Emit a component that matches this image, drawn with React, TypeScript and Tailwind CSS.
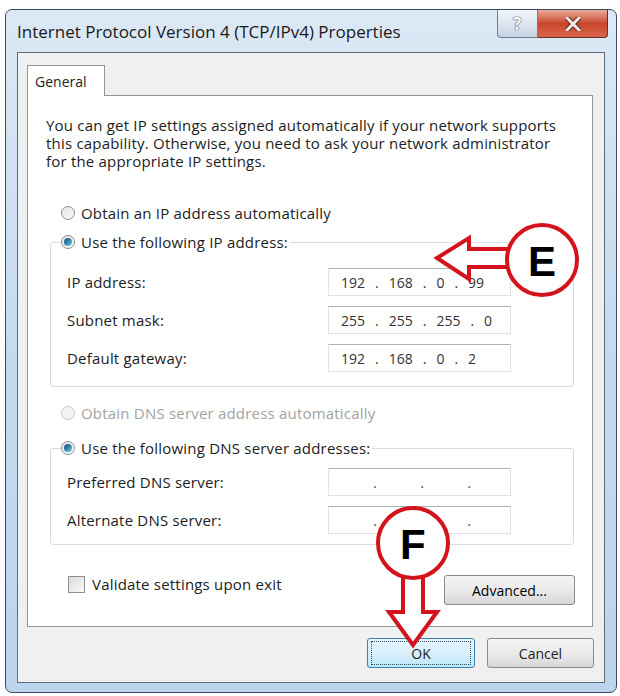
import type { ReactNode } from 'react';

const font = "font-['Open_Sans','Noto_Sans',sans-serif]";

function Radio({ checked = false, disabled = false }: { checked?: boolean; disabled?: boolean }) {
  return (
    <span
      className={`flex h-[14px] w-[14px] shrink-0 items-center justify-center rounded-full border ${
        disabled ? 'border-[#c9c9c9] bg-[#f2f2f2]' : 'border-[#8a8f95] bg-gradient-to-br from-[#e6e6e6] to-[#fafafa]'
      }`}
    >
      {checked && (
        <span className="h-[8px] w-[8px] rounded-full bg-gradient-to-br from-[#1d4f6e] via-[#2f86ad] to-[#7fd3ef]" />
      )}
    </span>
  );
}

function RadioRow({ label, checked, disabled }: { label: string; checked?: boolean; disabled?: boolean }) {
  return (
    <div className="flex h-[20px] items-center gap-[6px]">
      <Radio checked={checked} disabled={disabled} />
      <span className={disabled ? 'text-[#a3a3a3]' : 'text-[#1c1c1c]'}>{label}</span>
    </div>
  );
}

function IpField({ parts }: { parts: string[] }) {
  return (
    <div className="flex h-[28px] w-[183px] items-center gap-[10px] border border-[#dfe3e8] border-t-[#aeb2b8] bg-white pl-[12px] text-[14px] tracking-normal text-[#333]">
      {parts.map((p, i) => (
        <span key={i} className="flex items-center gap-[10px]">
          {i > 0 && <span>.</span>}
          <span>{p}</span>
        </span>
      ))}
    </div>
  );
}

function EmptyIpField() {
  return (
    <div className="flex h-[28px] w-[183px] items-center gap-[43px] border border-[#dfe3e8] border-t-[#aeb2b8] bg-white pl-[44px] text-[#555]">
      <span>.</span>
      <span>.</span>
      <span>.</span>
    </div>
  );
}

function FieldRow({ label, children }: { label: string; children: ReactNode }) {
  return (
    <div className="flex h-[28px] items-center">
      <span className="w-[261px] text-[#1c1c1c]">{label}</span>
      {children}
    </div>
  );
}

function Group({ legend, children }: { legend: ReactNode; children: ReactNode }) {
  return (
    <fieldset className="ml-[22px] mr-[18px] rounded-[3px] border border-[#d5dde3] pl-[10px]">
      <legend className="pr-[2px]">{legend}</legend>
      {children}
    </fieldset>
  );
}

function PushButton({ children, primary = false, className = '' }: { children: ReactNode; primary?: boolean; className?: string }) {
  return (
    <div
      className={`flex h-[30px] items-center justify-center rounded-[3px] border text-[14px] tracking-normal ${
        primary
          ? 'border-[#3c7fb1] bg-gradient-to-b from-[#eaf6fd] via-[#d9f0fc] to-[#bee6fd]'
          : 'border-[#8b8b8b] bg-gradient-to-b from-[#f4f4f4] via-[#ebebeb] to-[#d7d7d7]'
      } ${className}`}
    >
      {primary ? (
        <span className="flex h-[24px] w-[100px] items-center justify-center border border-dotted border-[#2b4f6a]">
          {children}
        </span>
      ) : (
        children
      )}
    </div>
  );
}

function Annotations() {
  return (
    <svg className="pointer-events-none absolute left-0 top-0" width="620" height="696" viewBox="0 0 620 696">
      <polygon
        points="437,258 469,238 469,249 510,249 510,267 469,267 469,279"
        fill="white"
        stroke="#d4141c"
        strokeWidth="4"
        strokeLinejoin="miter"
      />
      <circle cx="542" cy="260" r="35" fill="white" stroke="#d4141c" strokeWidth="4" />
      <text
        x="542"
        y="276"
        textAnchor="middle"
        fontFamily="Liberation Sans, Arial, sans-serif"
        fontWeight="bold"
        fontSize="42"
        fill="#000"
      >
        E
      </text>
      <polygon
        points="403,572 423,572 423,612 437,612 413,645 389,612 403,612"
        fill="white"
        stroke="#d4141c"
        strokeWidth="4"
        strokeLinejoin="miter"
      />
      <circle cx="413" cy="543" r="35" fill="white" stroke="#d4141c" strokeWidth="4" />
      <text
        x="413"
        y="559"
        textAnchor="middle"
        fontFamily="Liberation Sans, Arial, sans-serif"
        fontWeight="bold"
        fontSize="42"
        fill="#000"
      >
        F
      </text>
    </svg>
  );
}

export default function App() {
  return (
    <div className={`relative h-[696px] w-[620px] overflow-hidden bg-white pt-[9px] pl-[5px] ${font} text-[15px] tracking-[0.2px]`}>
      <div className="flex h-[684px] w-[612px] flex-col rounded-[7px] border border-[#3a4a5c] bg-gradient-to-b from-[#dce8f5] via-[#c6daee] to-[#bcd4ec]">
        {/* title bar */}
        <div className="flex h-[42px] items-start">
          <span className="pl-[11px] pt-[12px] text-[17px] leading-[20px] tracking-normal text-[#1a1a1a]">
            Internet Protocol Version 4 (TCP/IPv4) Properties
          </span>
          <div className="ml-auto mr-[8px] flex">
            <div className="flex h-[28px] w-[41px] items-center justify-center rounded-bl-[4px] border border-t-0 border-[#6f7f92] bg-gradient-to-b from-[#f2f6fa] via-[#dde6f0] to-[#c6d3e1]">
              <span className="text-[17px] font-bold leading-none text-white [text-shadow:0_0_1px_#4a5460,0_0_1px_#4a5460,0_0_1px_#4a5460]">?</span>
            </div>
            <div className="flex h-[28px] w-[70px] items-center justify-center rounded-br-[4px] border border-l-0 border-t-0 border-[#6e2b22] bg-gradient-to-b from-[#e9a99b] via-[#c9452c] to-[#d8664d]">
              <svg width="16" height="14" viewBox="0 0 16 14">
                <path d="M2 1 L14 13 M14 1 L2 13" stroke="#5a2a22" strokeWidth="5" strokeLinecap="square" />
                <path d="M2 1 L14 13 M14 1 L2 13" stroke="#f4ece8" strokeWidth="3" strokeLinecap="square" />
              </svg>
            </div>
          </div>
        </div>

        {/* client area */}
        <div className="mx-[11px] flex h-[631px] flex-col border border-[#5e6b7a] bg-[#f0f0f0]">
          <div className="ml-[9px] mt-[12px] flex">
            <div className="relative z-10 -mb-px flex h-[31px] w-[78px] items-start border border-b-0 border-[#8e959c] bg-white pl-[7px] pt-[5px] text-[14px] tracking-normal text-[#1c1c1c]">
              General
            </div>
          </div>
          <div className="ml-[9px] mr-[11px] flex h-[532px] flex-col border border-[#8e959c] bg-white">
            <p className="pl-[18px] pr-[10px] pt-[20px] leading-[18px] text-[#1c1c1c]">
              You can get IP settings assigned automatically if your network supports
              <br />
              this capability. Otherwise, you need to ask your network administrator
              <br />
              for the appropriate IP settings.
            </p>

            <div className="ml-[33px] mt-[33px]">
              <RadioRow label="Obtain an IP address automatically" />
            </div>

            <div className="mt-[9px]">
              <Group legend={<RadioRow label="Use the following IP address:" checked />}>
                <div className="flex flex-col gap-[10px] pb-[14px] pl-[6px] pt-[16px]">
                  <FieldRow label="IP address:">
                    <IpField parts={['192', '168', '0', '99']} />
                  </FieldRow>
                  <FieldRow label="Subnet mask:">
                    <IpField parts={['255', '255', '255', '0']} />
                  </FieldRow>
                  <FieldRow label="Default gateway:">
                    <IpField parts={['192', '168', '0', '2']} />
                  </FieldRow>
                </div>
              </Group>
            </div>

            <div className="ml-[33px] mt-[16px]">
              <RadioRow label="Obtain DNS server address automatically" disabled />
            </div>

            <div className="mt-[15px]">
              <Group legend={<RadioRow label="Use the following DNS server addresses:" checked />}>
                <div className="flex flex-col gap-[10px] pb-[10px] pl-[6px] pt-[10px]">
                  <FieldRow label="Preferred DNS server:">
                    <EmptyIpField />
                  </FieldRow>
                  <FieldRow label="Alternate DNS server:">
                    <EmptyIpField />
                  </FieldRow>
                </div>
              </Group>
            </div>

            <div className="mt-[30px] flex items-start pl-[40px] pr-[17px]">
              <div className="flex h-[18px] items-center">
                <span className="h-[17px] w-[17px] border border-[#8e8f8f] bg-gradient-to-br from-[#dcdcdc] to-[#f8f8f8]" />
                <span className="ml-[7px] text-[#1c1c1c]">Validate settings upon exit</span>
              </div>
              <PushButton className="ml-auto w-[131px]">Advanced...</PushButton>
            </div>
          </div>

          <div className="mr-[10px] mt-[11px] flex justify-end gap-[12px] text-[#1c1c1c]">
            <PushButton primary className="w-[108px]">
              OK
            </PushButton>
            <PushButton className="w-[107px]">Cancel</PushButton>
          </div>
        </div>
      </div>
      <Annotations />
    </div>
  );
}
